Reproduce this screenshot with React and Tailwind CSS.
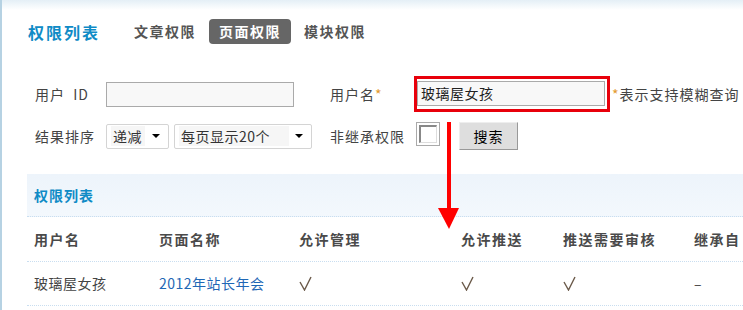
import React from "react";

const font = { fontFamily: '"Noto Sans CJK SC", "Liberation Sans", sans-serif' };

const columns = [
  { label: "用户名", w: "w-[125px]" },
  { label: "页面名称", w: "w-[140px]" },
  { label: "允许管理", w: "w-[162px]" },
  { label: "允许推送", w: "w-[102px]" },
  { label: "推送需要审核", w: "w-[131px]" },
  { label: "继承自", w: "flex-1" },
];

const Check = () => (
  <svg width="13" height="15" viewBox="0 0 13 15">
    <polyline points="1,6 5.5,14 12,1" fill="none" stroke="#6b5a4a" strokeWidth="1.4" />
  </svg>
);

const row = ["玻璃屋女孩", "2012年站长年会", <Check />, <Check />, <Check />, "–"];

const Select = ({ text, width, fill }) => (
  <div className={`${width} h-[25px] border border-[#d4d4d4] rounded-[2px] bg-white flex items-center pl-[4px] pr-[8px]`}>
    <span className={`${fill} bg-[#f6f6f6] px-[2px] text-[14px] tracking-[0.5px] text-[#333] leading-[20px]`}>{text}</span>
    <span className="ml-auto w-0 h-0 border-l-[4px] border-r-[4px] border-t-[4px] border-l-transparent border-r-transparent border-t-black" />
  </div>
);

export default function App() {
  return (
    <div
      style={font}
      className="relative w-[743px] h-[310px] overflow-hidden bg-white border-l-2 border-[#b6d2e3]"
    >
      <div className="h-[10px] bg-gradient-to-b from-[#e4eff6] to-white" />

      {/* tabs */}
      <div className="flex items-center pl-[26px] mt-[9px] h-[25px]">
        <span className="text-[16px] tracking-[2px] text-[#0f8bc6] font-bold w-[106px]">权限列表</span>
        <span className="text-[14px] tracking-[1.5px] font-bold text-[#555] w-[75px]">文章权限</span>
        <span className="h-[25px] w-[82px] justify-center rounded-[4px] bg-[#666] text-white text-[14px] tracking-[1.5px] font-bold flex items-center">
          页面权限
        </span>
        <span className="ml-[13px] text-[14px] tracking-[1.5px] font-bold text-[#555]">模块权限</span>
      </div>

      {/* search form */}
      <div className="pl-[33px] mt-[32px]">
        <div className="flex items-center h-[36px]">
          <span className="w-[71px] text-[14px] text-[#444] tracking-[1px] whitespace-pre">用户  ID</span>
          <div className="w-[188px] h-[25px] border border-[#aaa] bg-[#f8f8f8]" />
          <span className="ml-[36px] w-[84px] text-[14px] text-[#444] tracking-[1px]">
            用户名<span className="text-[#e39a2e]">*</span>
          </span>
          <div className="w-[196px] h-[36px] border-[3px] border-[#e8000b] pt-[2px]">
            <div className="w-[188px] h-[25px] border border-[#aaa] bg-[#f8f8f8] flex items-center pl-[3px] text-[14px] tracking-[0.5px] text-[#222]">
              玻璃屋女孩
            </div>
          </div>
          <span className="ml-[2px] text-[14px] text-[#444] tracking-[1px] whitespace-nowrap">
            <span className="text-[#e39a2e]">*</span>表示支持模糊查询
          </span>
        </div>

        <div className="flex items-center mt-[9px] h-[30px]">
          <span className="w-[71px] text-[14px] text-[#444] tracking-[1px]">结果排序</span>
          <Select text="递减" width="w-[63px]" fill="w-[34px]" />
          <div className="ml-[5px]">
            <Select text="每页显示20个" width="w-[138px]" fill="w-[110px]" />
          </div>
          <span className="ml-[18px] w-[86px] text-[14px] text-[#444] tracking-[1px]">非继承权限</span>
          <div className="w-[24px] h-[24px] border border-[#aaa] p-[2px] -mt-[5px] bg-white">
            <div className="w-full h-full border-t-2 border-l-2 border-[#888] border-r border-b border-r-[#ddd] border-b-[#ddd]" />
          </div>
          <button className="ml-[19px] w-[59px] h-[28px] bg-[#dedede] border border-[#999] border-t-[#eee] border-l-[#eee] text-[14px] tracking-[1px] text-black">
            搜索
          </button>
        </div>
      </div>

      {/* list */}
      <div className="ml-[25px] mt-[23px]">
        <div className="h-[43px] bg-gradient-to-b from-[#edf4fb] to-[#f3f8fd] border-b border-dotted border-[#c9def0] flex items-center pl-[7px]">
          <span className="text-[14px] tracking-[1px] font-bold text-[#0f8bc6]">权限列表</span>
        </div>
        <div className="flex h-[45px] border-b border-dotted border-[#c9def0]">
          {columns.map((c) => (
            <div key={c.label} className={`${c.w} pl-[7px] flex items-center text-[14px] tracking-[1.5px] font-bold text-[#4a4a4a] whitespace-nowrap`}>
              {c.label}
            </div>
          ))}
        </div>
        <div className="flex h-[44px] border-b border-dotted border-[#c9def0]">
          {columns.map((c, i) => (
            <div
              key={c.label}
              className={`${c.w} pl-[7px] flex items-center text-[14px] tracking-[0.5px] whitespace-nowrap ${
                i === 1 ? "text-[#1f67b5]" : "text-[#444]"
              }`}
            >
              {row[i]}
            </div>
          ))}
        </div>
      </div>

      {/* annotation arrow */}
      <svg className="absolute left-[436px] top-[122px]" width="22" height="108" viewBox="0 0 22 108">
        <rect x="9" y="0" width="4" height="88" fill="#f00" />
        <polygon points="0,86 21,86 11,107" fill="#f00" />
      </svg>
    </div>
  );
}
